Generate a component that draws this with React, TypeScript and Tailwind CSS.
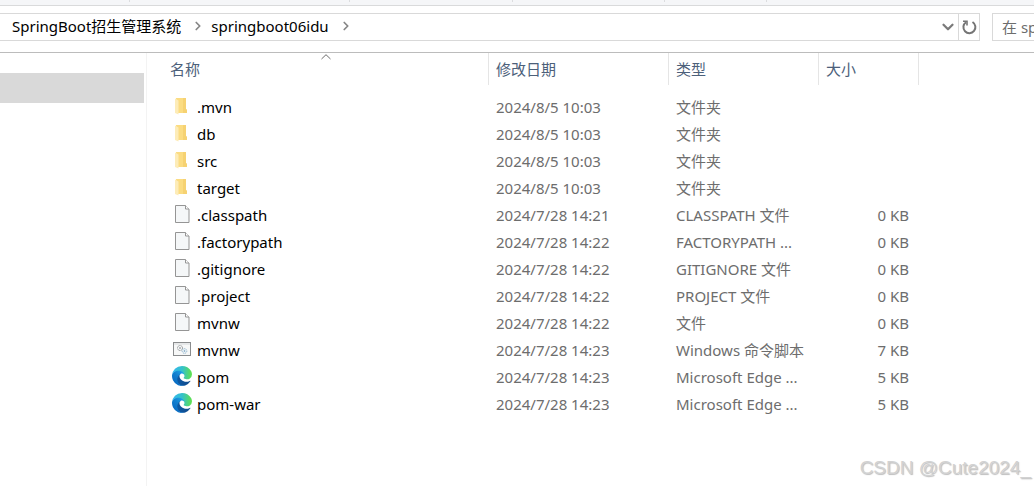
import { ChevronDown, ChevronRight } from 'lucide-react';

type IconKind = 'folder' | 'file' | 'script' | 'edge';

interface Entry {
  name: string;
  icon: IconKind;
  modified: string;
  type: string;
  size?: string;
}

const entries: Entry[] = [
  { name: '.mvn', icon: 'folder', modified: '2024/8/5 10:03', type: '文件夹' },
  { name: 'db', icon: 'folder', modified: '2024/8/5 10:03', type: '文件夹' },
  { name: 'src', icon: 'folder', modified: '2024/8/5 10:03', type: '文件夹' },
  { name: 'target', icon: 'folder', modified: '2024/8/5 10:03', type: '文件夹' },
  { name: '.classpath', icon: 'file', modified: '2024/7/28 14:21', type: 'CLASSPATH 文件', size: '0 KB' },
  { name: '.factorypath', icon: 'file', modified: '2024/7/28 14:22', type: 'FACTORYPATH ...', size: '0 KB' },
  { name: '.gitignore', icon: 'file', modified: '2024/7/28 14:22', type: 'GITIGNORE 文件', size: '0 KB' },
  { name: '.project', icon: 'file', modified: '2024/7/28 14:22', type: 'PROJECT 文件', size: '0 KB' },
  { name: 'mvnw', icon: 'file', modified: '2024/7/28 14:22', type: '文件', size: '0 KB' },
  { name: 'mvnw', icon: 'script', modified: '2024/7/28 14:23', type: 'Windows 命令脚本', size: '7 KB' },
  { name: 'pom', icon: 'edge', modified: '2024/7/28 14:23', type: 'Microsoft Edge ...', size: '5 KB' },
  { name: 'pom-war', icon: 'edge', modified: '2024/7/28 14:23', type: 'Microsoft Edge ...', size: '5 KB' },
];

function FolderIcon() {
  return (
    <>
      <path d="M4 2h10v11.500h1V17H5z" fill="#fbdc82" />
      <path d="M11 2h3v11.500h1V17h-4z" fill="#f6d272" />
      <path d="M3 2.500 6.500 4.500V18.500L3 17z" fill="#fdecb8" />
    </>
  );
}

function FileIcon() {
  return (
    <>
      <path d="M3.500 1.500h10l3.500 3.500v13.500h-13.500z" fill="#f5f7f8" stroke="#959595" />
      <path d="M13.500 1.500v3.500h3.500" fill="#ffffff" stroke="#959595" />
    </>
  );
}

function ScriptIcon() {
  return (
    <>
      <rect x="1.500" y="3.500" width="17" height="13" fill="#f7f8f8" stroke="#8a8c8e" />
      <path d="M2 5h16" stroke="#d5d7d9" />
      <circle cx="8" cy="9" r="2.500" fill="none" stroke="#85898d" strokeDasharray="1.200 .6" />
      <circle cx="8" cy="9" r="1" fill="#a6abb0" />
      <circle cx="12.500" cy="12" r="2.300" fill="none" stroke="#8db4cf" strokeDasharray="1.200 .6" />
      <circle cx="12.500" cy="12" r=".9" fill="#8db4cf" />
    </>
  );
}

function EdgeIcon() {
  return (
    <>
      <defs>
        <linearGradient id="edge-base" x1="58" y1="177" x2="236" y2="177" gradientUnits="userSpaceOnUse">
          <stop stopColor="#0c59a4" />
          <stop offset="1" stopColor="#114a8b" />
        </linearGradient>
        <linearGradient id="edge-side" x1="150" y1="100" x2="46" y2="210" gradientUnits="userSpaceOnUse">
          <stop stopColor="#1b9de2" />
          <stop offset=".5" stopColor="#127fcf" />
          <stop offset="1" stopColor="#0a6fc5" />
        </linearGradient>
        <linearGradient id="edge-wave" x1="10" y1="90" x2="250" y2="100" gradientUnits="userSpaceOnUse">
          <stop stopColor="#35b8ee" />
          <stop offset=".5" stopColor="#35c1c9" />
          <stop offset="1" stopColor="#5fe04f" />
        </linearGradient>
      </defs>
      <g transform="scale(.078)">
        <path
          fill="url(#edge-base)"
          d="M231 190.500c-3.400 1.800-6.900 3.400-10.500 4.700a101.900 101.900 0 0 1-35.900 6.400c-47.300 0-88.500-32.500-88.500-74.300 0-11.500 6.400-21.900 16.400-27.300-42.800 1.800-53.800 46.400-53.800 72.500 0 74 68.100 81.400 82.800 81.400 7.900 0 19.800-2.300 27-4.600l1.300-.4a128.300 128.300 0 0 0 66.600-52.800 4 4 0 0 0-5.400-5.600z"
        />
        <path
          fill="url(#edge-side)"
          d="M105.700 241.400a79.200 79.200 0 0 1-22.700-21.300 80.700 80.700 0 0 1 29.500-120c3.200-1.500 8.500-4.100 15.600-4a32.400 32.400 0 0 1 25.700 13 31.900 31.900 0 0 1 6.300 18.700c0-.2 24.500-79.600-80-79.600-43.900 0-80 41.700-80 78.200a130.200 130.200 0 0 0 12.100 56 128 128 0 0 0 156.400 67 75.500 75.500 0 0 1-62.800-8z"
        />
        <path
          fill="url(#edge-wave)"
          d="M152.300 148.900c-.8 1-3.300 2.500-3.300 5.700 0 2.600 1.700 5.100 4.700 7.200 14.400 10 41.500 8.700 41.600 8.700a59.600 59.600 0 0 0 30.300-8.300 61.400 61.400 0 0 0 30.400-52.900c.3-22.400-8-37.300-11.300-43.900C223.500 23.900 177.700 0 128 0A128 128 0 0 0 0 126.200c.5-36.500 36.800-66 80-66 3.500 0 23.500.3 42 10 16.300 8.600 24.900 18.900 30.800 29.200 6.200 10.700 7.300 24.100 7.300 29.500 0 5.300-2.700 13.300-7.800 20z"
        />
      </g>
    </>
  );
}

function EntryIcon({ kind }: { kind: IconKind }) {
  return (
    <svg viewBox="0 -2 20 25" className="h-[25px] w-5 shrink-0" aria-hidden="true">
      {kind === 'folder' && <FolderIcon />}
      {kind === 'file' && <FileIcon />}
      {kind === 'script' && <ScriptIcon />}
      {kind === 'edge' && <EdgeIcon />}
    </svg>
  );
}

// Bottom edge of the ribbon with its group dividers.
function Ribbon() {
  return (
    <div className="flex h-1.5 items-start border-b border-[#d9dadb] bg-[#f5f6f8]">
      <div className="h-0.5 w-[130px] border-r border-[#dcdddf]" />
      <div className="h-0.5 w-[220px] border-r border-[#dcdddf]" />
      <div className="h-0.5 w-[163px] border-r border-[#dcdddf]" />
      <div className="h-0.5 w-[152px] border-r border-[#dcdddf]" />
      <div className="h-0.5 w-[102px] border-r border-[#dcdddf]" />
    </div>
  );
}

function AddressBar() {
  return (
    <div className="flex gap-3 py-[7px]">
      <nav className="flex h-7 min-w-0 flex-1 items-center border border-l-0 border-[#d9d9d9]" aria-label="地址">
        <div className="flex min-w-0 flex-1 items-center overflow-hidden pb-0.5 whitespace-nowrap text-black">
          <ChevronRight size={14} strokeWidth={3} className="-ml-2.5 shrink-0 text-[#868686]" />
          <a href="#parent" className="ml-2">SpringBoot招生管理系统</a>
          <ChevronRight size={14} strokeWidth={3} className="mr-1.5 ml-2.5 shrink-0 text-[#868686]" />
          <a href="#current">springboot06idu</a>
          <ChevronRight size={14} strokeWidth={3} className="mr-1.5 ml-2.5 shrink-0 text-[#868686]" />
        </div>
        <button type="button" aria-label="以前的位置" className="flex h-full w-5 items-center justify-center text-[#7a7a7a]">
          <ChevronDown size={18} strokeWidth={3} className="shrink-0" />
        </button>
        <button type="button" aria-label="刷新" className="flex h-full w-[21px] items-center justify-center border-l border-[#d9d9d9]">
          <svg viewBox="0 0 16 16" className="size-4" fill="none" stroke="#757575" strokeWidth="2" aria-hidden="true">
            <path d="M11.500 3a6 6 0 1 1-6.500.2" />
            <path d="M2 2.200h4v4.300" strokeWidth="1.600" />
          </svg>
        </button>
      </nav>
      <input
        type="text"
        aria-label="搜索"
        placeholder="在 springboot06idu 中搜索"
        className="h-7 w-[42px] border border-r-0 border-[#d9d9d9] pl-[9px] outline-none placeholder:text-[#6d6d6d]"
      />
    </div>
  );
}

function FileTable() {
  return (
    <table className="w-full table-fixed text-left">
      <colgroup>
        <col className="w-[342px]" />
        <col className="w-[180px]" />
        <col className="w-[150px]" />
        <col className="w-[100px]" />
        <col />
      </colgroup>
      <thead className="text-[#4c607a]">
        <tr>
          <th className="p-0 pb-2 font-normal">
            <div className="relative flex h-8 items-center border-r border-[#e5e5e5] pl-[23px]">
              名称
              <svg viewBox="0 0 10 6" className="absolute top-px left-[174px] h-1.5 w-2.5" fill="none" stroke="#6d6d6d" aria-hidden="true">
                <path d="M.5 5 5 .7 9.500 5" />
              </svg>
            </div>
          </th>
          {['修改日期', '类型', '大小'].map(label => (
            <th key={label} className="p-0 pb-2 font-normal">
              <div className="flex h-8 items-center border-r border-[#e5e5e5] pl-[7px]">{label}</div>
            </th>
          ))}
          <td />
        </tr>
      </thead>
      <tbody className="text-[#6d6d6d]">
        {entries.map(entry => (
          <tr key={`${entry.name}-${entry.icon}`} className="h-[27px] whitespace-nowrap">
            <td className="p-0 pl-[25px] text-black">
              <div className="flex items-center gap-[5px]">
                <EntryIcon kind={entry.icon} />
                {entry.name}
              </div>
            </td>
            <td className="p-0 pl-[7px]">{entry.modified}</td>
            <td className="p-0 pl-[7px]">{entry.type}</td>
            <td className="p-0 pr-2.5 text-right">{entry.size}</td>
            <td />
          </tr>
        ))}
      </tbody>
    </table>
  );
}

export default function App() {
  return (
    <div className="relative flex min-h-screen flex-col overflow-hidden bg-white font-['Noto_Sans','Noto_Sans_CJK_SC',sans-serif] text-[15px] leading-[22px]">
      <Ribbon />
      <AddressBar />
      <div className="mt-1 flex flex-1 border-t border-[#bcbcbc]">
        <aside className="w-[147px] shrink-0 border-r border-[#f3f3f3] pt-5 pr-0.5">
          <div className="h-[30px] bg-[#d9d9d9]" />
        </aside>
        <main className="min-w-0 flex-1">
          <FileTable />
        </main>
      </div>
      <div className="absolute right-[3px] bottom-1.5 font-['Liberation_Sans',sans-serif] text-[19px] leading-6 text-[#d2d2d2] [text-shadow:1px_1px_1px_#bdbdbd]">
        CSDN @Cute2024_
      </div>
    </div>
  );
}
